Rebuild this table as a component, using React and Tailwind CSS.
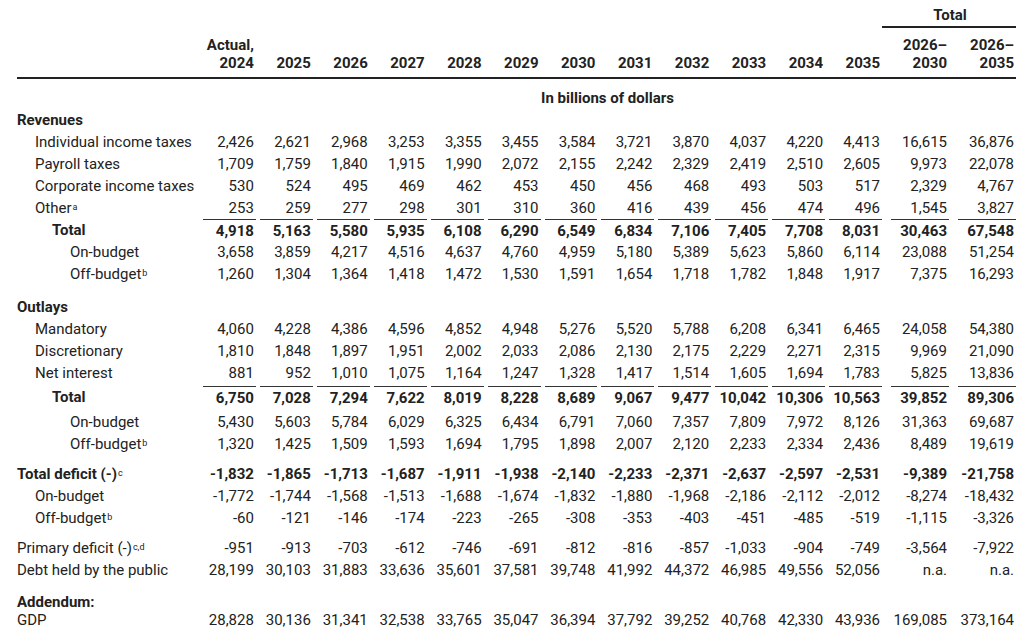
import React from "react";

const years = ["2025", "2026", "2027", "2028", "2029", "2030", "2031", "2032", "2033", "2034", "2035"];

const grid = "grid grid-cols-[182px_repeat(12,minmax(0,1fr))_67px_67px]";

const rows = [
  { type: "section", label: "Revenues", mt: "mt-0" },
  { label: "Individual income taxes", indent: 1, v: "2,426 2,621 2,968 3,253 3,355 3,455 3,584 3,721 3,870 4,037 4,220 4,413 16,615 36,876" },
  { label: "Payroll taxes", indent: 1, v: "1,709 1,759 1,840 1,915 1,990 2,072 2,155 2,242 2,329 2,419 2,510 2,605 9,973 22,078" },
  { label: "Corporate income taxes", indent: 1, v: "530 524 495 469 462 453 450 456 468 493 503 517 2,329 4,767" },
  { label: "Other", sup: "a", indent: 1, v: "253 259 277 298 301 310 360 416 439 456 474 496 1,545 3,827" },
  { label: "Total", indent: 2, bold: true, rule: true, v: "4,918 5,163 5,580 5,935 6,108 6,290 6,549 6,834 7,106 7,405 7,708 8,031 30,463 67,548" },
  { label: "On-budget", indent: 3, v: "3,658 3,859 4,217 4,516 4,637 4,760 4,959 5,180 5,389 5,623 5,860 6,114 23,088 51,254" },
  { label: "Off-budget", sup: "b", indent: 3, v: "1,260 1,304 1,364 1,418 1,472 1,530 1,591 1,654 1,718 1,782 1,848 1,917 7,375 16,293" },

  { type: "section", label: "Outlays", mt: "mt-[11px]" },
  { label: "Mandatory", indent: 1, v: "4,060 4,228 4,386 4,596 4,852 4,948 5,276 5,520 5,788 6,208 6,341 6,465 24,058 54,380" },
  { label: "Discretionary", indent: 1, v: "1,810 1,848 1,897 1,951 2,002 2,033 2,086 2,130 2,175 2,229 2,271 2,315 9,969 21,090" },
  { label: "Net interest", indent: 1, v: "881 952 1,010 1,075 1,164 1,247 1,328 1,417 1,514 1,605 1,694 1,783 5,825 13,836" },
  { label: "Total", indent: 2, bold: true, rule: true, mt: "mt-[2px]", v: "6,750 7,028 7,294 7,622 8,019 8,228 8,689 9,067 9,477 10,042 10,306 10,563 39,852 89,306" },
  { label: "On-budget", indent: 3, mt: "mt-[3px]", v: "5,430 5,603 5,784 6,029 6,325 6,434 6,791 7,060 7,357 7,809 7,972 8,126 31,363 69,687" },
  { label: "Off-budget", sup: "b", indent: 3, v: "1,320 1,425 1,509 1,593 1,694 1,795 1,898 2,007 2,120 2,233 2,334 2,436 8,489 19,619" },

  { label: "Total deficit (-)", sup: "c", indent: 0, bold: true, mt: "mt-[8px]", v: "-1,832 -1,865 -1,713 -1,687 -1,911 -1,938 -2,140 -2,233 -2,371 -2,637 -2,597 -2,531 -9,389 -21,758" },
  { label: "On-budget", indent: 1, v: "-1,772 -1,744 -1,568 -1,513 -1,688 -1,674 -1,832 -1,880 -1,968 -2,186 -2,112 -2,012 -8,274 -18,432" },
  { label: "Off-budget", sup: "b", indent: 1, v: "-60 -121 -146 -174 -223 -265 -308 -353 -403 -451 -485 -519 -1,115 -3,326" },

  { label: "Primary deficit (-)", sup: "c,d", indent: 0, mt: "mt-[8px]", v: "-951 -913 -703 -612 -746 -691 -812 -816 -857 -1,033 -904 -749 -3,564 -7,922" },
  { label: "Debt held by the public", indent: 0, v: "28,199 30,103 31,883 33,636 35,601 37,581 39,748 41,992 44,372 46,985 49,556 52,056 n.a. n.a." },

  { type: "section", label: "Addendum:", mt: "mt-[14px]", h: "h-[14px]" },
  { label: "GDP", indent: 0, v: "28,828 30,136 31,341 32,538 33,765 35,047 36,394 37,792 39,252 40,768 42,330 43,936 169,085 373,164" },
];

const indents = ["pl-0", "pl-[18px]", "pl-[35px]", "pl-[53px]"];

function Row({ row }) {
  if (row.type === "section") {
    return (
      <div className={`${row.mt} ${row.h || "h-[22px]"} flex items-center font-bold`}>
        {row.label}
      </div>
    );
  }
  const vals = row.v.split(" ");
  return (
    <div className={`${grid} ${row.mt || ""} ${row.bold ? "font-bold" : ""}`}>
      <div className={`${indents[row.indent]} h-[22px] flex items-center whitespace-nowrap`}>
        {row.label}
        {row.sup && <sup className="text-[9px] font-normal relative -top-[1px] ml-[1px]">{row.sup}</sup>}
      </div>
      {vals.map((x, i) => (
        <div
          key={i}
          className={`flex items-center justify-end pr-[2px] ${row.rule ? "h-[22px] pt-[2px] relative" : "h-[22px]"}`}
        >
          {row.rule && (
            <span className={`absolute top-0 right-0 h-px bg-[#333] ${i >= 12 ? "left-[9px]" : "left-[4px]"}`} />
          )}
          {x}
        </div>
      ))}
    </div>
  );
}

export default function App() {
  return (
    <div className="bg-white w-[1024px] h-[641px] overflow-hidden text-[15px] leading-none text-[#222]" style={{ fontFamily: "Roboto, 'Liberation Sans', sans-serif" }}>
      <div className="ml-[17px] w-[999px] pt-[4px]">
        {/* header */}
        <div className={grid}>
          <div className="col-span-13" />
          <div className="col-span-2 h-[24px] flex items-center justify-center pl-[2px] font-bold border-b-2 border-[#222]">
            Total
          </div>
        </div>
        <div className={`${grid} font-bold pt-[8px] pb-[5px] border-b-2 border-[#222] leading-[18px]`}>
          <div />
          <div className="text-right pr-[2px]">
            <div>Actual,</div>
            <div>2024</div>
          </div>
          {years.map((y) => (
            <div key={y} className="text-right pr-[2px] flex items-end justify-end">{y}</div>
          ))}
          <div className="text-right pr-[2px]">
            <div>2026–</div>
            <div>2030</div>
          </div>
          <div className="text-right pr-[2px]">
            <div>2026–</div>
            <div>2035</div>
          </div>
        </div>
        <div className={`${grid} mt-[9px]`}>
          <div />
          <div className="col-span-14 h-[21px] flex items-center justify-center font-bold">In billions of dollars</div>
        </div>
        {rows.map((r, i) => (
          <Row key={i} row={r} />
        ))}
      </div>
    </div>
  );
}
